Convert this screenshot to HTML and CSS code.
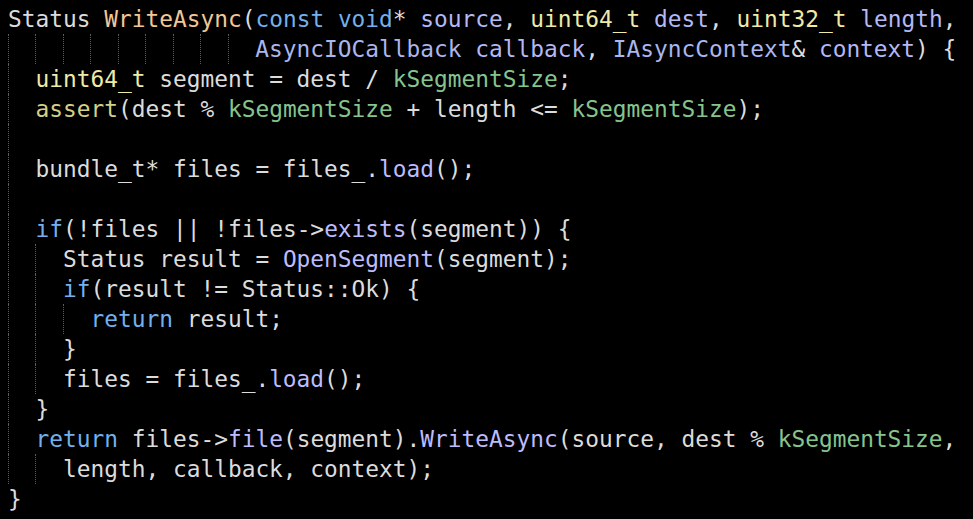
FILE: index.html
```html
<!DOCTYPE html>
<html>
<head>
<meta charset="utf-8">
<link rel="stylesheet" href="styles.css">
</head>
<body>
<div class="code">
<div class="ln">Status <span class="fn">WriteAsync</span>(<span class="kw">const</span> <span class="kw">void</span>* <span class="pa">source</span>, <span class="ty">uint64_t</span> <span class="pa">dest</span>, <span class="ty">uint32_t</span> <span class="pa">length</span>,</div>
<div class="ln"><span class="g"></span><span class="g"></span><span class="g"></span><span class="g"></span><span class="g"></span><span class="g"></span><span class="g"></span><span class="g"></span><span class="g"></span><span class="cl">AsyncIOCallback</span> <span class="pa">callback</span>, <span class="cl">IAsyncContext</span>&amp; <span class="pa">context</span>) {</div>
<div class="ln"><span class="g"></span><span class="ty">uint64_t</span> segment = dest / <span class="mc">kSegmentSize</span>;</div>
<div class="ln"><span class="g"></span><span class="as">assert</span>(dest % <span class="mc">kSegmentSize</span> + length &lt;= <span class="mc">kSegmentSize</span>);</div>
<div class="ln"><span class="g"></span></div>
<div class="ln"><span class="g"></span>bundle_t* files = files_.<span class="me">load</span>();</div>
<div class="ln"><span class="g"></span></div>
<div class="ln"><span class="g"></span><span class="kw">if</span>(!files || !files-&gt;<span class="me">exists</span>(segment)) {</div>
<div class="ln"><span class="g"></span><span class="g"></span>Status result = <span class="me">OpenSegment</span>(segment);</div>
<div class="ln"><span class="g"></span><span class="g"></span><span class="kw">if</span>(result != Status::Ok) {</div>
<div class="ln"><span class="g"></span><span class="g"></span><span class="g"></span><span class="kw">return</span> result;</div>
<div class="ln"><span class="g"></span><span class="g"></span>}</div>
<div class="ln"><span class="g"></span><span class="g"></span>files = files_.<span class="me">load</span>();</div>
<div class="ln"><span class="g"></span>}</div>
<div class="ln"><span class="g"></span><span class="kw">return</span> files-&gt;<span class="me">file</span>(segment).<span class="me">WriteAsync</span>(source, dest % <span class="mc">kSegmentSize</span>,</div>
<div class="ln"><span class="g"></span><span class="g"></span>length, callback, context);</div>
<div class="ln">}</div>
</div>
</body>
</html>
```
FILE: styles.css
```css
html, body {
  margin: 0;
  padding: 0;
  background: #000000;
}

.code {
  padding: 4px 0 0 8px;
  font-family: "DejaVu Sans Mono", "Liberation Mono", monospace;
  font-size: 22.84px;
  line-height: 30px;
  color: #dcdcdc;
}

.ln {
  height: 30px;
  white-space: pre;
}

.g {
  display: inline-block;
  width: 2ch;
  height: 30px;
  vertical-align: top;
  box-sizing: border-box;
  border-left: 1px dotted #5c5c5c;
}

.fn { color: #f2c797; }
.kw { color: #72b0ee; }
.pa { color: #b4b8f4; }
.ty { color: #eeeaa8; }
.cl { color: #aab6ec; }
.mc { color: #86c48e; }
.as { color: #d2d08a; }
.me { color: #bcbcff; }
```
